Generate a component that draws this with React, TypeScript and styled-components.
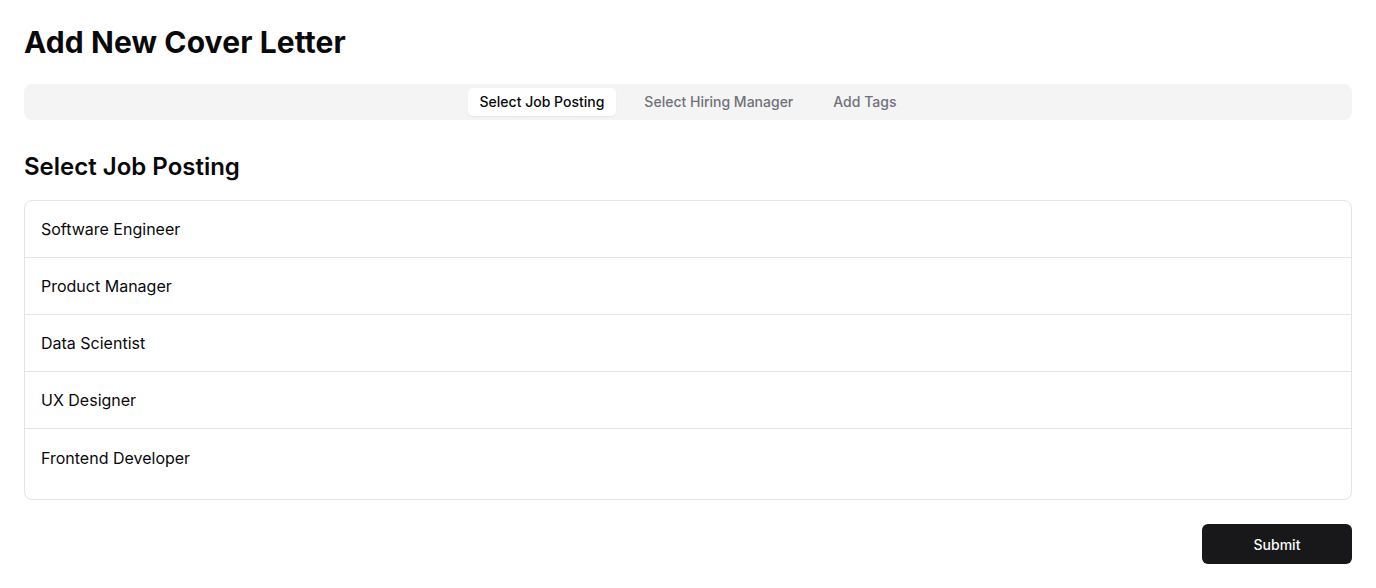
import React, { useState } from 'react';
import styled, { createGlobalStyle } from 'styled-components';

const GlobalStyle = createGlobalStyle`
  * { box-sizing: border-box; }
  body {
    margin: 0;
    background: #ffffff;
    font-family: Inter, "Noto Sans", sans-serif;
    color: #09090b;
  }
`;

const Page = styled.div`
  padding: 24px;
  display: flex;
  flex-direction: column;
`;

const Title = styled.h1`
  margin: 0 0 24px;
  font-size: 30px;
  line-height: 36px;
  font-weight: 700;
  letter-spacing: 0.1px;
`;

const TabList = styled.div`
  height: 36px;
  background: #f4f4f5;
  border-radius: 8px;
  display: flex;
  align-items: center;
  justify-content: center;
  gap: 16px;
  padding: 4px;
`;

const Tab = styled.button<{ $active: boolean }>`
  height: 28px;
  padding: 0 12px 1px;
  border: none;
  border-radius: 5px;
  font-family: inherit;
  font-size: 14px;
  font-weight: 500;
  cursor: pointer;
  background: ${p => (p.$active ? '#ffffff' : 'transparent')};
  color: ${p => (p.$active ? '#09090b' : '#71717a')};
  box-shadow: ${p => (p.$active ? '0 1px 2px rgba(0,0,0,0.06)' : 'none')};
`;

const SectionTitle = styled.h2`
  margin: 31px 0 17px;
  font-size: 24px;
  line-height: 32px;
  font-weight: 600;
`;

const ListBox = styled.div`
  height: 300px;
  border: 1px solid #e4e4e7;
  border-radius: 8px;
  overflow: hidden;
`;

const Row = styled.div`
  height: 57px;
  padding: 0 16px;
  display: flex;
  align-items: center;
  font-size: 16px;
  color: #09090b;
  border-bottom: 1px solid #e4e4e7;
  cursor: pointer;

  &:last-child {
    border-bottom: none;
  }
`;

const Footer = styled.div`
  display: flex;
  justify-content: flex-end;
  margin-top: 24px;
`;

const SubmitButton = styled.button`
  width: 150px;
  height: 40px;
  border: none;
  border-radius: 6px;
  background: #18181b;
  color: #fafafa;
  font-family: inherit;
  font-size: 14px;
  font-weight: 500;
  cursor: pointer;
`;

const tabs = ['Select Job Posting', 'Select Hiring Manager', 'Add Tags'];
const jobs = ['Software Engineer', 'Product Manager', 'Data Scientist', 'UX Designer', 'Frontend Developer'];

const App: React.FC = () => {
  const [active, setActive] = useState(0);

  return (
    <Page>
      <GlobalStyle />
      <Title>Add New Cover Letter</Title>
      <TabList>
        {tabs.map((t, i) => (
          <Tab key={t} $active={i === active} onClick={() => setActive(i)}>
            {t}
          </Tab>
        ))}
      </TabList>
      <SectionTitle>Select Job Posting</SectionTitle>
      <ListBox>
        {jobs.map(j => (
          <Row key={j}>{j}</Row>
        ))}
      </ListBox>
      <Footer>
        <SubmitButton>Submit</SubmitButton>
      </Footer>
    </Page>
  );
};

export default App;
